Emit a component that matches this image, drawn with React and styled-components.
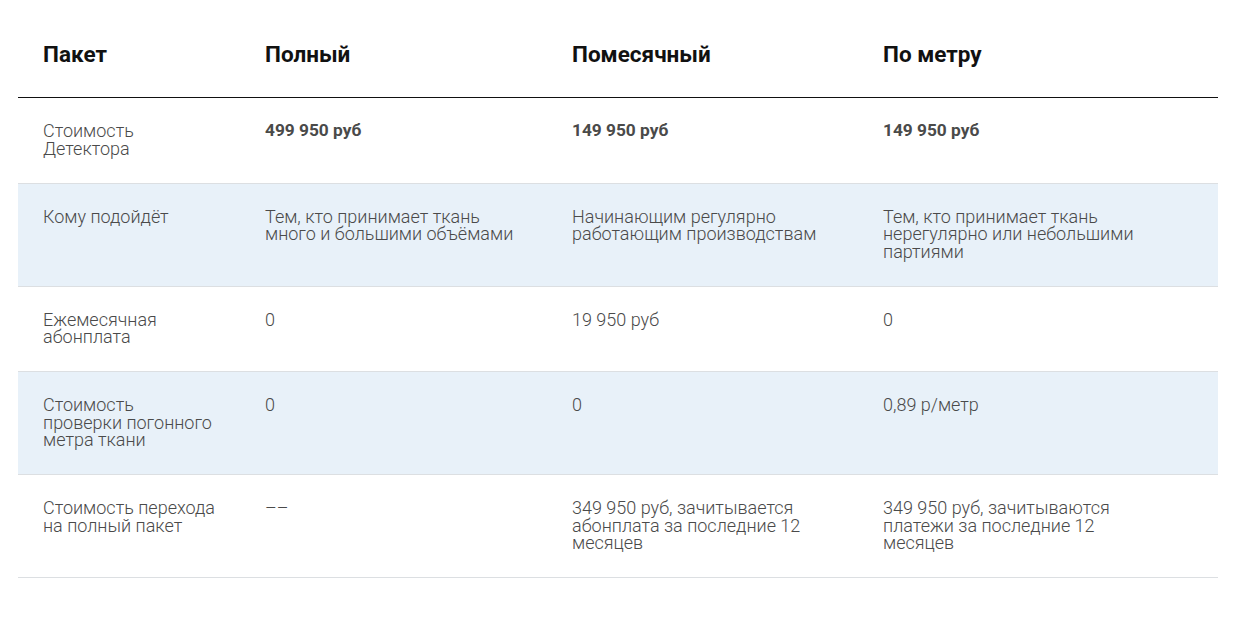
import React from "react";
import styled, { createGlobalStyle } from "styled-components";

const GlobalStyle = createGlobalStyle`
  body {
    margin: 0;
    background: #fff;
    font-family: Roboto, "Liberation Sans", sans-serif;
  }
`;

const Page = styled.div`
  padding: 10px 18px 40px;
`;

const Table = styled.table`
  width: 1200px;
  border-collapse: collapse;
  table-layout: fixed;
`;

const HeadCell = styled.th`
  text-align: left;
  vertical-align: top;
  padding: 32px 20px 31px 25px;
  font-size: 22.5px;
  line-height: 24px;
  font-weight: 700;
  color: #111;
  border-bottom: 1px solid #111;
`;

const Row = styled.tr`
  background: ${({ $tinted }) => ($tinted ? "#e8f1f9" : "#fff")};
  border-bottom: 1px solid #dcdfe2;
`;

const Cell = styled.td`
  vertical-align: top;
  padding: 24px 24px 25.5px 25px;
  font-size: ${({ $bold }) => ($bold ? "17.3px" : "18px")};
  line-height: 17.5px;
  font-weight: ${({ $bold }) => ($bold ? 700 : 300)};
  color: #4a4a4a;

  &:last-child {
    padding-right: 60px;
  }
`;

const columns = ["Пакет", "Полный", "Помесячный", "По метру"];
const widths = [222, 307, 311, 360];

const rows = [
  {
    label: "Стоимость Детектора",
    bold: true,
    values: ["499 950 руб", "149 950 руб", "149 950 руб"],
  },
  {
    label: "Кому подойдёт",
    values: [
      "Тем, кто принимает ткань много и большими объёмами",
      "Начинающим регулярно работающим производствам",
      "Тем, кто принимает ткань нерегулярно или небольшими партиями",
    ],
  },
  {
    label: "Ежемесячная абонплата",
    values: ["0", "19 950 руб", "0"],
  },
  {
    label: "Стоимость проверки погонного метра ткани",
    values: ["0", "0", "0,89 р/метр"],
  },
  {
    label: "Стоимость перехода на полный пакет",
    values: [
      "––",
      "349 950 руб, зачитывается абонплата за последние 12 месяцев",
      "349 950 руб, зачитываются платежи за последние 12 месяцев",
    ],
  },
];

export default function App() {
  return (
    <Page>
      <GlobalStyle />
      <Table>
        <colgroup>
          {widths.map((w, i) => (
            <col key={i} style={{ width: w }} />
          ))}
        </colgroup>
        <thead>
          <tr>
            {columns.map((c) => (
              <HeadCell key={c}>{c}</HeadCell>
            ))}
          </tr>
        </thead>
        <tbody>
          {rows.map((r, i) => (
            <Row key={r.label} $tinted={i % 2 === 1}>
              <Cell>{r.label}</Cell>
              {r.values.map((v, j) => (
                <Cell key={j} $bold={r.bold}>
                  {v}
                </Cell>
              ))}
            </Row>
          ))}
        </tbody>
      </Table>
    </Page>
  );
}
